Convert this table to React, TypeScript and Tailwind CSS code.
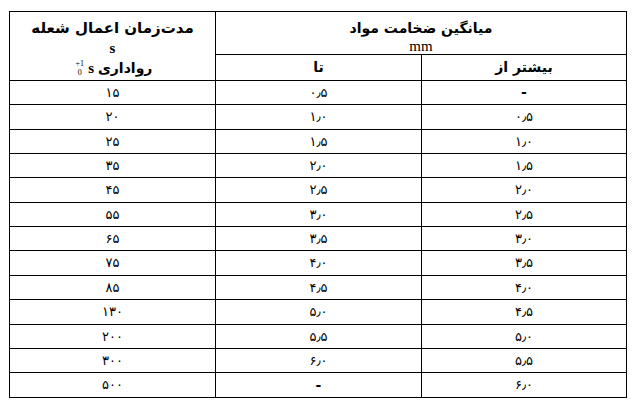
const ROWS: [string, string, string][] = [
  ["-", "۰٫۵", "۱۵"],
  ["۰٫۵", "۱٫۰", "۲۰"],
  ["۱٫۰", "۱٫۵", "۲۵"],
  ["۱٫۵", "۲٫۰", "۳۵"],
  ["۲٫۰", "۲٫۵", "۴۵"],
  ["۲٫۵", "۳٫۰", "۵۵"],
  ["۳٫۰", "۳٫۵", "۶۵"],
  ["۳٫۵", "۴٫۰", "۷۵"],
  ["۴٫۰", "۴٫۵", "۸۵"],
  ["۴٫۵", "۵٫۰", "۱۳۰"],
  ["۵٫۰", "۵٫۵", "۲۰۰"],
  ["۵٫۵", "۶٫۰", "۳۰۰"],
  ["۶٫۰", "-", "۵۰۰"],
];

function Cell({ value }: { value: string }) {
  const dash = value === "-";
  return (
    <div className="flex items-center justify-center bg-white">
      <span className={dash ? "text-[14px] font-bold" : "text-[13px]"}>{value}</span>
    </div>
  );
}

export default function App() {
  return (
    <div className="h-[411px] w-[638px] bg-white pl-[9px] pt-[11px] font-['DejaVu_Sans',sans-serif] text-black">
      <div
        dir="rtl"
        className="grid w-[618px] grid-cols-[204px_205px_205px] grid-rows-[42px_25px_23px_24px_23px_23px_24px_23px_23px_24px_23px_24px_23px_23px_24px] gap-px border border-black bg-black"
      >
        {/* thickness header */}
        <div className="col-span-2 flex flex-col items-center bg-white pt-[7px]">
          <span className="text-[14px] font-bold leading-[18px]">میانگین ضخامت مواد</span>
          <span className="mt-[2px] font-['Liberation_Serif',serif] text-[15px] leading-[14px]">mm</span>
        </div>

        {/* duration header */}
        <div className="row-span-2 flex flex-col items-center bg-white pt-[7px]">
          <span className="text-[15px] font-bold leading-[18px]">مدت‌زمان اعمال شعله</span>
          <span className="mt-[3px] font-['Liberation_Serif',serif] text-[15px] font-bold leading-[16px]">s</span>
          <div className="mt-[3px] flex items-center gap-[4px]">
            <span className="text-[14px] font-bold leading-[16px]">رواداری</span>
            <span className="font-['Liberation_Serif',serif] text-[15px] font-bold leading-[16px]">s</span>
            <span
              dir="ltr"
              className="ml-[3px] flex flex-col items-center font-['Liberation_Serif',serif] text-[8px] leading-[9px]"
            >
              <span>+1</span>
              <span>0</span>
            </span>
          </div>
        </div>

        <div className="flex items-center justify-center bg-white">
          <span className="text-[14px] font-bold">بیشتر از</span>
        </div>
        <div className="flex items-center justify-center bg-white">
          <span className="text-[14px] font-bold">تا</span>
        </div>

        {ROWS.map((row, i) =>
          row.map((v, j) => <Cell key={`${i}-${j}`} value={v} />)
        )}
      </div>
    </div>
  );
}
